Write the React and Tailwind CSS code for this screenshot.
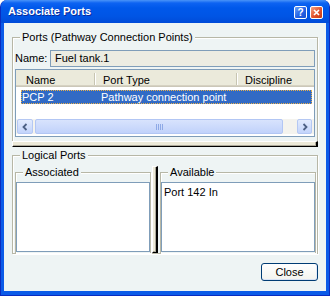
import React from 'react';

// client area colour, also used behind group titles so the frame line stops at the text
const CLIENT = 'bg-[#eef4f4]';

const Group = ({ title, className = '', children }) => (
    <fieldset className={`border border-[#b7b7a6] shadow-[inset_1px_1px_0_#fff,1px_1px_0_#fff] ${className}`}>
        <legend className={`ml-[7px] px-[2px] leading-[13px] ${CLIENT}`}>{title}</legend>
        {children}
    </fieldset>
);

const Splitter = ({ className = '' }) => (
    <div className={`bg-[#ece9d8] border-t border-l border-white border-r-2 border-b border-r-black border-b-black shadow-[inset_-1px_-1px_0_#aca899] ${className}`} />
);

const ScrollArrow = ({ dir }) => (
    <div className="w-full h-full rounded-[2px] border border-[#b5c8f3] bg-[linear-gradient(to_bottom,#e2ebfe,#c3d4fb)] flex items-center justify-center">
        <svg width="6" height="8" viewBox="0 0 6 8">
            <path
                d={dir === 'left' ? 'M4.5 1 L1.5 4 L4.5 7' : 'M1.5 1 L4.5 4 L1.5 7'}
                fill="none"
                stroke="#4d6185"
                strokeWidth="1.8"
            />
        </svg>
    </div>
);

const ListView = () => (
    <div className="mt-[2px] mx-[2px] h-[68px] border border-[#7f9db9] bg-white flex flex-col">
        {/* column header */}
        <div className="h-[17px] shrink-0 flex bg-[#ebeadb] shadow-[inset_0_-1px_0_#cbc7b8,inset_0_-2px_0_#d6d2c2]">
            <div className="w-[78px] pt-[4px] pl-[10px]">Name</div>
            <div className="w-[2px] mt-[3px] mb-[2px] border-l border-[#c7c5b2] border-r border-r-white" />
            <div className="w-[140px] pt-[4px] pl-[7px]">Port Type</div>
            <div className="w-[2px] mt-[3px] mb-[2px] border-l border-[#c7c5b2] border-r border-r-white" />
            <div className="flex-1 pt-[4px] pl-[7px]">Discipline</div>
        </div>

        {/* selected row */}
        <div className="mt-[3px] ml-[5px] mr-[2px] h-[14px] flex items-center bg-[#316ac5] text-white border border-dotted border-[#e9b04a]">
            <span className="w-[79px]">PCP 2</span>
            <span>Pathway connection point</span>
        </div>

        {/* horizontal scrollbar */}
        <div className="mt-auto mb-[2px] h-[15px] flex bg-[#f4f3ee]">
            <div className="ml-[1px] w-[16px]">
                <ScrollArrow dir="left" />
            </div>
            <div className="ml-[2px] w-[248px] rounded-[2px] border border-[#b2c6f4] bg-[linear-gradient(to_bottom,#d8e3fd,#c1d2fb)] flex items-center justify-center gap-[1px]">
                <div className="w-px h-[6px] bg-[#8ea9e6]" />
                <div className="w-px h-[6px] bg-[#8ea9e6]" />
                <div className="w-px h-[6px] bg-[#8ea9e6]" />
                <div className="w-px h-[6px] bg-[#8ea9e6]" />
            </div>
            <div className="flex-1" />
            <div className="w-[15px] mr-[2px]">
                <ScrollArrow dir="right" />
            </div>
        </div>
    </div>
);

export default function App() {
    return (
        <div className="w-[330px] h-[296px] flex flex-col rounded-t-[7px] overflow-hidden bg-[#0b5be8] border-x border-b border-[#0a2cc0] font-['Liberation_Sans',Arial,sans-serif] text-[11px] leading-[13px] text-black">
            {/* title bar */}
            <div className="h-[23px] shrink-0 flex items-center justify-between pl-[7px] pr-[6px] bg-[linear-gradient(to_bottom,#4a94f8_0px,#0d63f2_3px,#0058ea_8px,#0055e5_16px,#004bd8_23px)]">
                <span className="text-white font-bold text-[11px] [text-shadow:1px_1px_0_#0a2a9a]">Associate Ports</span>
                <div className="flex gap-[3px] mt-[2px]">
                    <div className="w-[13px] h-[13px] rounded-[2px] border border-white bg-[linear-gradient(135deg,#6ea2f8,#2363e6_55%,#1a4fcf)] flex items-center justify-center text-white font-bold text-[10px] leading-none">
                        ?
                    </div>
                    <div className="w-[13px] h-[13px] rounded-[2px] border border-white bg-[linear-gradient(135deg,#f4a283,#e2512a_55%,#c23a16)] flex items-center justify-center">
                        <svg width="7" height="7" viewBox="0 0 7 7">
                            <path d="M1 1 L6 6 M6 1 L1 6" stroke="#fff" strokeWidth="1.7" />
                        </svg>
                    </div>
                </div>
            </div>

            {/* frame + client area */}
            <div className="flex-1 flex px-[3px] pb-[4px]">
                <div className={`flex-1 flex flex-col px-[8px] pt-[8px] ${CLIENT}`}>
                    <Group title="Ports (Pathway Connection Points)" className="border-b-0 pb-[4px]">
                        <div className="mt-[6px] px-[2px] flex items-center">
                            <span className="w-[35px]">Name:</span>
                            <div className="flex-1 h-[17px] flex items-center pl-[4px] border border-[#7f9db9] bg-[#ecece2]">
                                Fuel tank.1
                            </div>
                        </div>
                        <ListView />
                    </Group>

                    <Splitter className="h-[6px] shrink-0" />

                    <Group title="Logical Ports" className="mt-[2px]">
                        <div className="mt-[4px] h-[87px] pl-[2px] pr-[1px] flex">
                            <Group title="Associated" className="w-[136px] border-b-0 flex flex-col">
                                <div className="mt-[3px] mb-[1px] flex-1 border border-[#7f9db9] bg-white" />
                            </Group>
                            <Splitter className="ml-[1px] w-[6px]" />
                            <Group title="Available" className="ml-[2px] flex-1 border-b-0 flex flex-col">
                                <div className="mt-[3px] mb-[1px] flex-1 border border-[#7f9db9] bg-white pl-[2px] pt-[3px]">
                                    Port 142 In
                                </div>
                            </Group>
                        </div>
                    </Group>

                    <div className="mt-[9px] flex justify-end">
                        <button className="w-[57px] h-[18px] rounded-[3px] border border-[#003c74] bg-[linear-gradient(to_bottom,#ffffff,#f3f3ee)] shadow-[inset_0_-1px_0_#d8e2f6,inset_-1px_0_0_#e3eaf8] leading-[13px]">
                            Close
                        </button>
                    </div>
                </div>
            </div>
        </div>
    );
}
